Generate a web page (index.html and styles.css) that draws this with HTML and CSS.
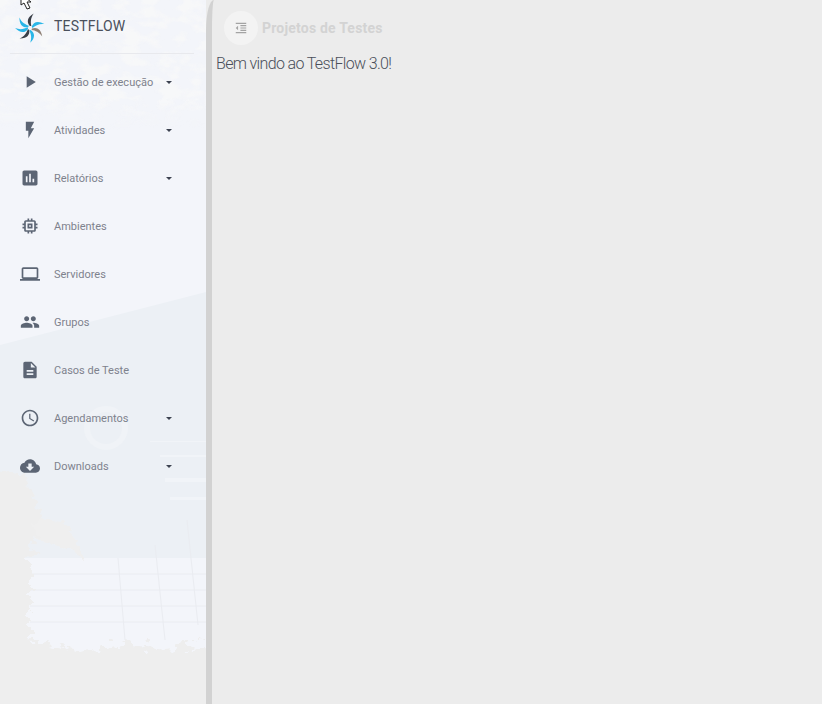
FILE: index.html
```html
<!DOCTYPE html>
<html lang="pt-BR">
<head>
<meta charset="utf-8">
<title>TestFlow</title>
<link rel="stylesheet" href="styles.css">
</head>
<body>
<div class="app">
  <aside class="sidebar">
    <svg class="backdrop" viewBox="0 0 206 704" preserveAspectRatio="none" aria-hidden="true">
      <defs>
        <filter id="rough" x="-10%" y="-10%" width="120%" height="120%">
          <feTurbulence type="fractalNoise" baseFrequency="0.09 0.14" numOctaves="3" seed="7" result="n"/>
          <feDisplacementMap in="SourceGraphic" in2="n" scale="26"/>
        </filter>
        <filter id="mottle" x="0" y="0" width="100%" height="100%">
          <feTurbulence type="fractalNoise" baseFrequency="0.05 0.09" numOctaves="3" seed="4"/>
          <feColorMatrix type="matrix" values="0 0 0 0 0.93  0 0 0 0 0.935  0 0 0 0 0.945  3.2 3.2 0 0 -2.9"/>
        </filter>
        <linearGradient id="fade" x1="0" y1="0" x2="0" y2="1">
          <stop offset="0" stop-color="#fff"/>
          <stop offset=".75" stop-color="#fff"/>
          <stop offset="1" stop-color="#000"/>
        </linearGradient>
        <mask id="topfade"><rect width="206" height="130" fill="url(#fade)"/></mask>
      </defs>

      <path fill="#ecf0f5" d="M0 345 L206 292 V558 H0Z"/>
      <path fill="#f3f5fa" d="M0 558 H206 V650 H0Z"/>
      <path fill="none" stroke="#eaecf1" d="M30 574H206M30 590H206M30 606H206M30 622H206M118 558L125 640M155 545L165 640M187 520L198 625"/>

      <g mask="url(#topfade)"><rect width="206" height="130" filter="url(#mottle)"/></g>

      <circle class="ring" cx="106" cy="428" r="19"/>
      <path fill="#f1f4f8" d="M160 455h46v2h-46zM150 441h56v1h-56zM165 478h41v4h-41zM170 497h36v3h-36z"/>

      <g filter="url(#rough)">
        <path fill="#eeeeee" d="M-20 780V644L40 642 80 652 120 644 165 649 235 640V780Z"/>
        <path fill="#eeeeee" d="M-20 470L28 476 40 520 30 560 30 650 -20 650Z"/>
        <path fill="#efefef" d="M36 516L68 524 86 564 76 552 52 544 36 539Z"/>
      </g>
    </svg>

    <div class="brand">
      <svg class="logo" viewBox="-15 -15 30 30" aria-hidden="true">
        <defs><path id="blade" d="M0-2C-3-6-2-11 5-14 1.500-10 1-6 1.500-2Z"/></defs>
        <use class="blade-blue" href="#blade" transform="rotate(-65)"/>
        <use class="blade-dark" href="#blade" transform="rotate(-5)"/>
        <use class="blade-blue" href="#blade" transform="rotate(55)"/>
        <use class="blade-brown" href="#blade" transform="rotate(105)"/>
        <use class="blade-blue" href="#blade" transform="rotate(160)"/>
        <use class="blade-dark" href="#blade" transform="rotate(205)"/>
        <use class="blade-blue" href="#blade" transform="rotate(250)"/>
      </svg>
      <span class="brand-name">TESTFLOW</span>
    </div>

    <nav class="menu">
      <a class="item">
        <svg class="icon" viewBox="0 0 24 24"><path d="M8 5v14l11-7z"/></svg>
        <span class="label">Gestão de execução</span><i class="caret"></i>
      </a>
      <a class="item">
        <svg class="icon" viewBox="0 0 24 24"><path d="M7 2v11h3v9l7-12h-4l4-8z"/></svg>
        <span class="label">Atividades</span><i class="caret"></i>
      </a>
      <a class="item">
        <svg class="icon" viewBox="0 0 24 24"><path d="M19 3H5c-1.1 0-2 .9-2 2v14c0 1.1.9 2 2 2h14c1.1 0 2-.9 2-2V5c0-1.1-.9-2-2-2zM9 17H7v-7h2v7zm4 0h-2V7h2v10zm4 0h-2v-4h2v4z"/></svg>
        <span class="label">Relatórios</span><i class="caret"></i>
      </a>
      <a class="item">
        <svg class="icon" viewBox="0 0 24 24"><path d="M15 9H9v6h6V9zm-2 4h-2v-2h2v2zm8-2V9h-2V7c0-1.1-.9-2-2-2h-2V3h-2v2h-2V3H9v2H7c-1.1 0-2 .9-2 2v2H3v2h2v2H3v2h2v2c0 1.1.9 2 2 2h2v2h2v-2h2v2h2v-2h2c1.1 0 2-.9 2-2v-2h2v-2h-2v-2h2zm-4 6H7V7h10v10z"/></svg>
        <span class="label">Ambientes</span>
      </a>
      <a class="item">
        <svg class="icon" viewBox="0 0 24 24"><path d="M20 18c1.1 0 1.99-.9 1.99-2L22 6c0-1.1-.9-2-2-2H4c-1.1 0-2 .9-2 2v10c0 1.1.9 2 2 2H0v2h24v-2h-4zM4 6h16v10H4V6z"/></svg>
        <span class="label">Servidores</span>
      </a>
      <a class="item">
        <svg class="icon" viewBox="0 0 24 24"><path d="M16 11c1.66 0 2.99-1.34 2.99-3S17.66 5 16 5c-1.66 0-3 1.34-3 3s1.34 3 3 3zm-8 0c1.66 0 2.99-1.34 2.99-3S9.66 5 8 5C6.34 5 5 6.34 5 8s1.34 3 3 3zm0 2c-2.33 0-7 1.17-7 3.5V19h14v-2.5c0-2.33-4.67-3.5-7-3.5zm8 0c-.29 0-.62.02-.97.05 1.16.84 1.97 1.97 1.97 3.45V19h6v-2.5c0-2.33-4.67-3.5-7-3.5z"/></svg>
        <span class="label">Grupos</span>
      </a>
      <a class="item">
        <svg class="icon" viewBox="0 0 24 24"><path d="M14 2H6c-1.1 0-1.99.9-1.99 2L4 20c0 1.1.89 2 1.99 2H18c1.1 0 2-.9 2-2V8l-6-6zm2 16H8v-2h8v2zm0-4H8v-2h8v2zm-3-5V3.5L18.5 9H13z"/></svg>
        <span class="label">Casos de Teste</span>
      </a>
      <a class="item">
        <svg class="icon" viewBox="0 0 24 24"><path d="M11.99 2C6.47 2 2 6.48 2 12s4.47 10 9.99 10C17.52 22 22 17.52 22 12S17.52 2 11.99 2zM12 20c-4.42 0-8-3.58-8-8s3.58-8 8-8 8 3.58 8 8-3.58 8-8 8zm.5-13H11v6l5.25 3.15.75-1.23-4.5-2.67z"/></svg>
        <span class="label">Agendamentos</span><i class="caret"></i>
      </a>
      <a class="item">
        <svg class="icon" viewBox="0 0 24 24"><path d="M19.35 10.04C18.67 6.59 15.64 4 12 4 9.11 4 6.6 5.64 5.35 8.04 2.34 8.36 0 10.91 0 14c0 3.31 2.69 6 6 6h13c2.76 0 5-2.24 5-5 0-2.64-2.05-4.78-4.65-4.96zM17 13l-5 5-5-5h3V9h4v4h3z"/></svg>
        <span class="label">Downloads</span><i class="caret"></i>
      </a>
    </nav>
  </aside>

  <main class="content">
    <header class="toolbar">
      <button class="toggle" type="button" aria-label="Recolher menu">
        <svg viewBox="0 0 24 24"><path d="M11 17h10v-2H11v2zm-8-5l4 4V8l-4 4zm0 9h18v-2H3v2zM3 3v2h18V3H3zm8 6h10V7H11v2zm0 4h10v-2H11v2z"/></svg>
      </button>
      <span class="title">Projetos de Testes</span>
    </header>
    <p class="welcome">Bem vindo ao TestFlow 3.0!</p>
  </main>
</div>
<svg class="pointer" viewBox="0 0 14 12" aria-hidden="true"><path d="M1-6 1 5 4 3 7 9 10 8 7 2 11 2Z"/></svg>
</body>
</html>
```

FILE: styles.css
```css
* { box-sizing: border-box; }
html, body { margin: 0; height: 100%; }
body {
  background: #ececec;
  font-family: Roboto, "Liberation Sans", sans-serif;
  overflow: hidden;
}
.app { display: flex; height: 704px; }

.sidebar {
  position: relative;
  flex: 0 0 206px;
  background: #f3f5fa;
  padding: 0 12px 0 10px;
  overflow: hidden;
  z-index: 1;
}
.backdrop {
  position: absolute;
  inset: 0;
  width: 100%;
  height: 100%;
}
.ring { fill: none; stroke: #f0f3f7; stroke-width: 6; }

.brand {
  position: relative;
  display: flex;
  align-items: center;
  height: 54px;
  padding: 0 0 2px 5px;
  border-bottom: 1px solid #e8e9ed;
}
.logo { width: 30px; height: 30px; margin: 5px 9px 0 0; flex: none; }
.blade-blue { fill: #29b6e8; }
.blade-dark { fill: #3a3f47; }
.blade-brown { fill: #8f8176; }
.brand-name { font-size: 14px; color: #4a505c; letter-spacing: .2px; }

.menu { position: relative; display: flex; flex-direction: column; margin-top: 4px; }
.item { display: flex; align-items: center; height: 48px; }
.icon {
  width: 20px;
  height: 20px;
  margin: 0 14px 0 10px;
  fill: #5c6574;
  flex: none;
}
.label { font-size: 11px; white-space: nowrap; color: #7e828d; }
.caret {
  position: absolute;
  left: 156px;
  width: 0;
  height: 0;
  border: 3px solid transparent;
  border-top-color: #3c4250;
  border-bottom: 0;
}

.content { flex: 1; padding-left: 4px; border-left: 6px solid #d2d2d2; border-top-left-radius: 8px 30px; }
.toolbar { display: flex; align-items: center; height: 56px; padding-left: 8px; }
.toggle {
  display: flex;
  align-items: center;
  justify-content: center;
  width: 34px;
  height: 34px;
  padding: 0;
  border: 0;
  border-radius: 50%;
  background: #f3f3f3;
}
.toggle svg { width: 14px; height: 14px; fill: #a3a3a3; }
.title { margin-left: 4px; font-size: 14px; font-weight: 700; color: #d3d3d3; letter-spacing: .2px; }
.welcome {
  margin: 0;
  font-size: 16px;
  font-weight: 300;
  line-height: 16px;
  letter-spacing: -.65px;
  color: #4a4f5a;
}

.pointer {
  position: absolute;
  left: 20px;
  top: 0;
  width: 14px;
  height: 12px;
  fill: #fff;
  stroke: #222;
  stroke-width: 1;
  z-index: 2;
}
```
